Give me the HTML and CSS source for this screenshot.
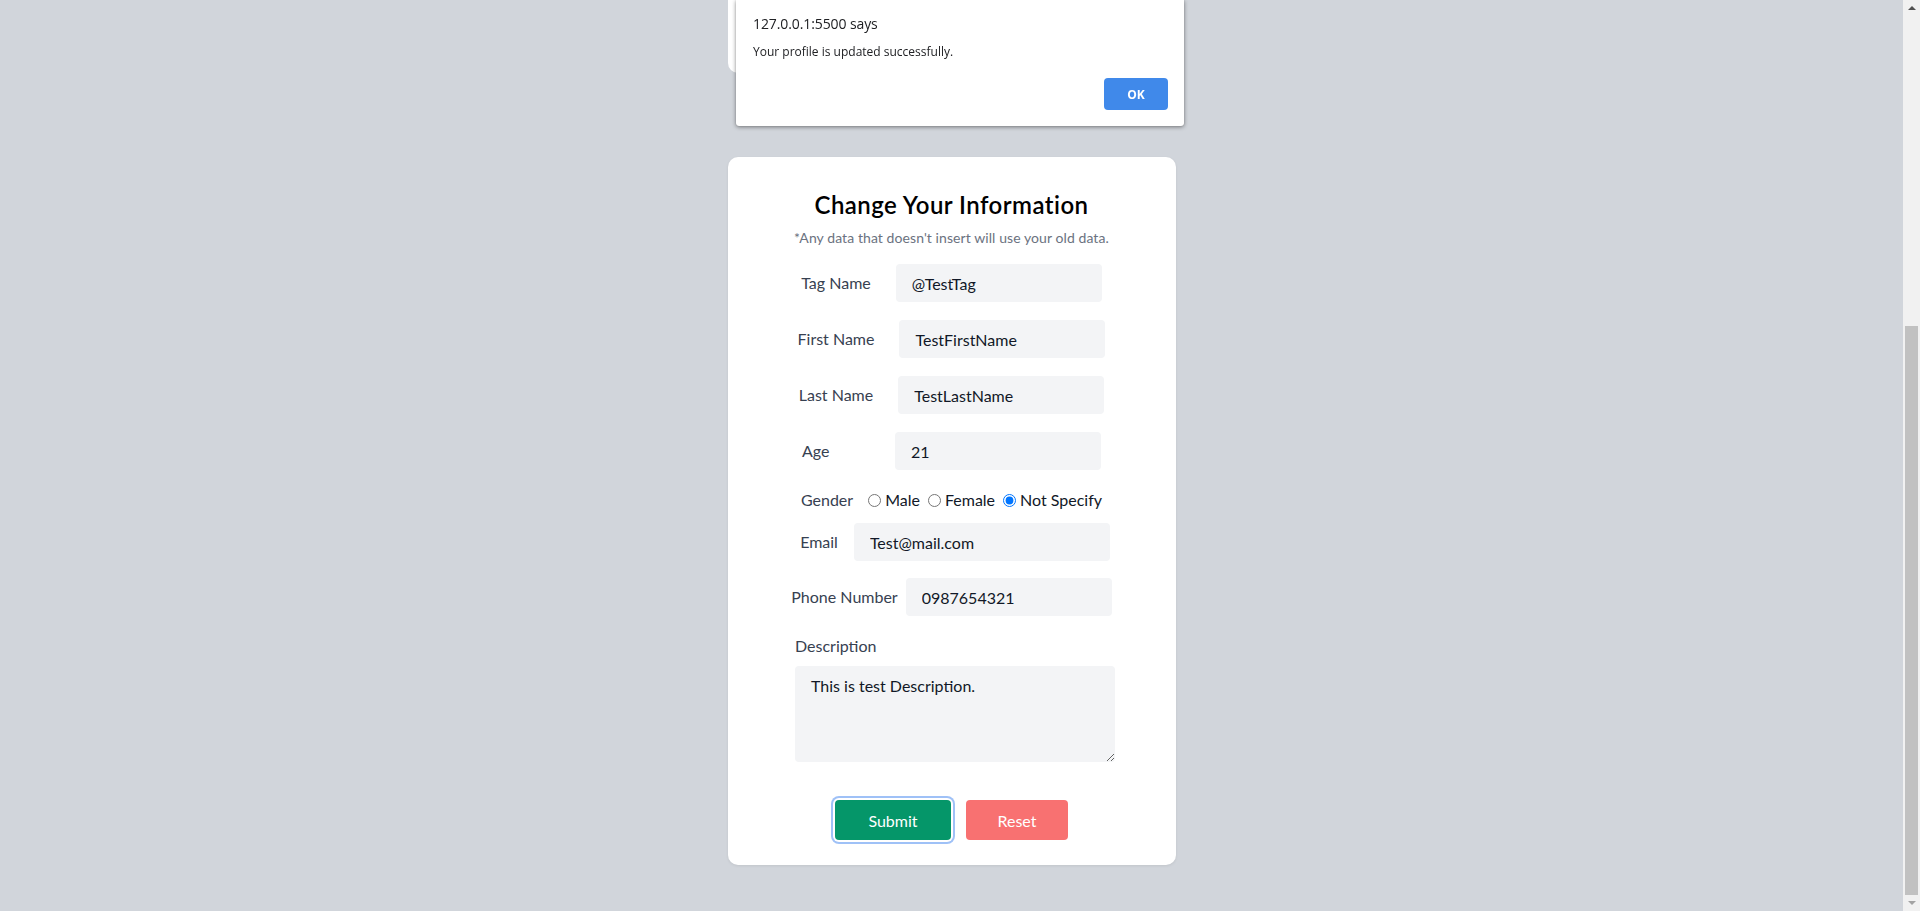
FILE: index.html
```html
<!DOCTYPE html>
<html lang="en">
<head>
<meta charset="utf-8">
<title>Change Your Information</title>
<link rel="stylesheet" href="styles.css">
</head>
<body>
<div class="page">
  <div class="prev-card"></div>
  <form class="card">
    <h1 class="title">Change Your Information</h1>
    <p class="subtitle">*Any data that doesn't insert will use your old data.</p>

    <div class="row row-first gap-25">
      <label class="label">Tag Name</label>
      <input class="field" type="text" value="@TestTag">
    </div>
    <div class="row gap-25">
      <label class="label">First Name</label>
      <input class="field" type="text" value="TestFirstName">
    </div>
    <div class="row gap-25">
      <label class="label">Last Name</label>
      <input class="field" type="text" value="TestLastName">
    </div>
    <div class="row gap-25">
      <label class="label label-age">Age</label>
      <input class="field" type="text" value="21">
    </div>
    <div class="row row-gender">
      <span class="label gender-label">Gender</span>
      <label class="radio"><input type="radio" name="gender">Male</label>
      <label class="radio"><input type="radio" name="gender">Female</label>
      <label class="radio"><input type="radio" name="gender" checked>Not Specify</label>
    </div>
    <div class="row row-email gap-16">
      <label class="label">Email</label>
      <input class="field field-wide" type="text" value="Test@mail.com">
    </div>
    <div class="row row-phone gap-8">
      <label class="label">Phone Number</label>
      <input class="field" type="text" value="0987654321">
    </div>

    <div class="desc">
      <label class="label">Description</label>
      <textarea class="textarea">This is test Description.</textarea>
    </div>

    <div class="buttons">
      <button type="button" class="btn btn-submit">Submit</button>
      <button type="button" class="btn btn-reset">Reset</button>
    </div>
  </form>
</div>

<div class="dialog">
  <div class="dialog-title">127.0.0.1:5500 says</div>
  <div class="dialog-msg">Your profile is updated successfully.</div>
  <div class="dialog-actions"><button type="button" class="dialog-ok">OK</button></div>
</div>

<div class="scrollbar">
  <div class="sb-up"></div>
  <div class="sb-track"><div class="sb-thumb"></div></div>
  <div class="sb-down"></div>
</div>
</body>
</html>
```

FILE: styles.css
```css
* { box-sizing: border-box; }

html, body {
  margin: 0;
  padding: 0;
  height: 100%;
  overflow: hidden;
}

body {
  background: #d1d5db;
  font-family: Lato, "Liberation Sans", sans-serif;
  color: #374151;
}

.page {
  width: calc(100% - 17px);
  display: flex;
  flex-direction: column;
  align-items: center;
}

.prev-card {
  width: 448px;
  height: 73px;
  background: #fff;
  border-radius: 0 0 10px 10px;
}

.card {
  width: 448px;
  margin: 84px 0 0 0;
  padding: 32px 0 25px;
  background: #fff;
  border-radius: 10px;
  box-shadow: 0 1px 3px rgba(0, 0, 0, 0.08);
  display: flex;
  flex-direction: column;
  align-items: center;
}

.title {
  margin: 0;
  font-size: 24px;
  line-height: 32px;
  font-weight: 600;
  color: #000;
  letter-spacing: 0.45px;
}

.subtitle {
  margin: 7px 0 0;
  font-size: 14px;
  line-height: 20px;
  color: #6b7280;
  letter-spacing: 0.08px;
}

.row {
  display: flex;
  justify-content: center;
  align-items: center;
  margin-top: 18px;
}

.row-first { margin-top: 16px; }
.row-gender { margin-top: 18px; height: 24px; }
.row-email { margin-top: 11px; padding-left: 7px; }
.row-phone { margin-top: 17px; }

.gap-25 { gap: 25px; }
.gap-16 { gap: 16px; }
.gap-8 { gap: 8px; }

.label {
  font-size: 16px;
  line-height: 24px;
  color: #374151;
}

.label-age {
  width: 68px;
}

.field {
  width: 206px;
  height: 38px;
  padding: 0 16px;
  border: none;
  border-radius: 4px;
  background: #f3f4f6;
  font-family: Lato, "Liberation Sans", sans-serif;
  font-size: 16px;
  color: #111827;
  outline: none;
}

.field-wide { width: 256px; }

.gender-label { margin-right: 15px; }

.radio {
  display: flex;
  align-items: center;
  font-size: 16px;
  line-height: 24px;
  color: #111827;
  margin-right: 8px;
}

.radio:last-child { margin-right: 0; }

.radio input {
  width: 13px;
  height: 13px;
  margin: 0 4px 0 0;
}

.desc {
  width: 320px;
  margin-top: 18px;
  margin-left: 7px;
  display: flex;
  flex-direction: column;
}

.textarea {
  margin-top: 8px;
  width: 320px;
  height: 96px;
  padding: 8px 16px;
  border: none;
  border-radius: 4px;
  background: #f3f4f6;
  font-family: Lato, "Liberation Sans", sans-serif;
  font-size: 16px;
  line-height: 24px;
  color: #111827;
  outline: none;
}

.buttons {
  margin-top: 38px;
  display: flex;
  gap: 15px;
}

.btn {
  height: 40px;
  border: none;
  border-radius: 4px;
  font-family: Lato, "Liberation Sans", sans-serif;
  font-size: 16px;
  color: #fff;
  cursor: pointer;
}

.btn-submit {
  width: 116px;
  background: #059669;
  box-shadow: 0 0 0 2px #fff, 0 0 0 4px #9fc1f7;
}

.btn-reset {
  width: 102px;
  background: #f87171;
}

/* browser alert */
.dialog {
  position: fixed;
  top: 0;
  left: calc(50% - 224px);
  width: 448px;
  height: 126px;
  background: #fff;
  border-radius: 0 0 3px 3px;
  box-shadow: 0 1px 4px rgba(0, 0, 0, 0.45), 0 0 1px rgba(0, 0, 0, 0.3);
  padding: 14px 16px 16px 17px;
  display: flex;
  flex-direction: column;
  font-family: "Open Sans", "Liberation Sans", sans-serif;
  color: #202124;
}

.dialog-title {
  font-size: 14px;
  line-height: 20px;
  letter-spacing: -0.1px;
}

.dialog-msg {
  margin-top: 9px;
  font-size: 12px;
  line-height: 18px;
}

.dialog-actions {
  margin-top: auto;
  display: flex;
  justify-content: flex-end;
}

.dialog-ok {
  width: 64px;
  height: 32px;
  border: none;
  border-radius: 4px;
  background: #4089ea;
  color: #fff;
  font-family: "Open Sans", "Liberation Sans", sans-serif;
  font-weight: 700;
  font-size: 12px;
}

/* scrollbar */
.scrollbar {
  position: fixed;
  top: 0;
  right: 0;
  width: 17px;
  height: 100%;
  background: #f1f1f1;
  display: flex;
  flex-direction: column;
}

.sb-up, .sb-down {
  height: 17px;
  display: flex;
  justify-content: center;
  align-items: center;
}

.sb-up::before {
  content: "";
  border-left: 4px solid transparent;
  border-right: 4px solid transparent;
  border-bottom: 4px solid #505050;
}

.sb-down::before {
  content: "";
  border-left: 4px solid transparent;
  border-right: 4px solid transparent;
  border-top: 4px solid #a3a3a3;
}

.sb-track {
  flex: 1;
  padding: 309px 2px 0;
}

.sb-thumb {
  height: 569px;
  background: #c1c1c1;
}
```
